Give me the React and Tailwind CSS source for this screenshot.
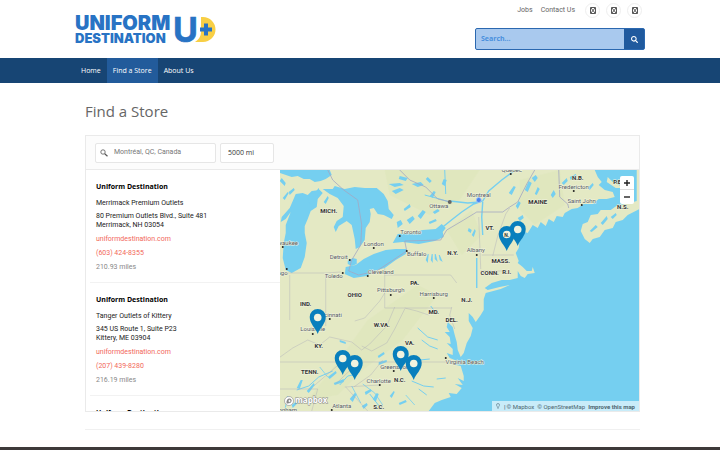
import { FaSearch } from "react-icons/fa";

const stores = [
  {
    id: 1,
    place: "Merrimack Premium Outlets",
    street: "80 Premium Outlets Blvd., Suite 481",
    city: "Merrimack, NH 03054",
    phone: "(603) 424-8355",
    distance: "210.93 miles",
  },
  {
    id: 2,
    place: "Tanger Outlets of Kittery",
    street: "345 US Route 1, Suite P23",
    city: "Kittery, ME 03904",
    phone: "(207) 439-8280",
    distance: "216.19 miles",
  },
  {
    id: 3,
    place: "Tanger Outlets Riverhead",
    street: "200 Tanger Mall Drive",
    city: "Riverhead, NY 11901",
    phone: "(631) 369-2732",
    distance: "317.40 miles",
  },
];

const socials = ["Facebook", "Twitter", "Instagram"];

const pins = [
  [238, 76],
  [227, 81],
  [38, 164],
  [63, 205],
  [75, 210],
  [121, 201],
  [134, 210],
];

const states = [
  ["MICH.", 49, 43],
  ["N.Y.", 173, 85],
  ["PA.", 135, 115],
  ["OHIO", 75, 127],
  ["IND.", 26, 136],
  ["W.VA.", 102, 157],
  ["KY.", 39, 178],
  ["VA.", 130, 175],
  ["TENN.", 30, 204],
  ["N.C.", 120, 212],
  ["S.C.", 99, 239],
  ["MD.", 154, 144],
  ["DEL.", 172, 152],
  ["N.J.", 187, 132],
  ["CONN.", 210, 105],
  ["R.I.", 227, 104],
  ["MASS.", 221, 93],
  ["VT.", 210, 60],
  ["MAINE", 258, 34],
  ["N.B.", 298, 10],
  ["P.E.I.", 340, 14],
  ["N.S.", 343, 39],
];

// name, label x, label y, dot x, dot y
const cities = [
  ["Québec", 232, 2, 231, 4],
  ["Ottawa", 159, 38, 170, 32],
  ["Montreal", 199, 27, 199, 30],
  ["Fredericton", 294, 19, 294, 21],
  ["Saint John", 302, 33, 302, 35],
  ["Toronto", 131, 64, 120, 66],
  ["London", 94, 76, 94, 78],
  ["Detroit", 59, 89, 70, 90],
  ["Toledo", 54, 108, 63, 103],
  ["Cleveland", 101, 104, 88, 106],
  ["Buffalo", 137, 86, 127, 81],
  ["Albany", 196, 82, 197, 85],
  ["Pittsburgh", 111, 122, 111, 125],
  ["Harrisburg", 154, 126, 154, 128],
  ["Milwaukee", 4, 75, 3, 77],
  ["Chicago", -3, 105, 7, 99],
  ["Cincinnati", 49, 147, 50, 149],
  ["Louisville", 33, 161, 33, 164],
  ["Greensboro", 116, 199, 114, 201],
  ["Charlotte", 99, 213, 100, 215],
  ["Virginia Beach", 185, 194, 166, 188],
  ["Atlanta", 62, 238, 52, 240],
  ["Birmingham", 1, 242, -20, 241],
];

const ponds = [
  "M120 6l8 2-2 3-7-2zM132 14l9-2 3 3-6 2zM148 7l4 4-2 2-4-4zM117 52l4-2 2 4-5 4zM127 50l6-4 2 3-5 5zM138 46l5-6 3 2-5 7zM109 14l11-1 4 2-9 2z",
  "M150 26l4-5 2 1-3 6zM162 14l2-5 3 1-2 6zM112 21l8-3 4 2-8 4zM124 39l6-5 1 3-6 4zM149 52l7-3 1 2-7 3zM153 42l5-3 2 2-5 3z",
  "M229 23l5-7 2 1-4 8zM245 20l4-9 3 2-4 9zM255 24l3-7 2 2-3 6zM252 8l4-3 2 3-3 4zM236 36l3-5 2 2-3 6zM238 48l5-3 1 3-4 3zM271 25l3-5 2 4-3 4zM282 13l5-5 1 3-4 4z",
  "M310 61l6-6 2 2-6 5zM321 53l6-7 1 3-5 6zM290 7l6-3 1 2-6 4zM308 18l5-5 1 2-4 5zM331 47l5-4 1 2-4 4zM192 65l3-6 1 2-2 6z",
  "M146 90l2-6 1 0-1 9zM151 90l1-6 1 0 0 9zM155 89l0-5 1 0 2 8zM160 90l-1-5 1 0 3 7zM189 58l3 2-1 3-3-2zM68 91l5-3 4 1 0 5-5 2-4-2z",
  "M2 8l4 5-1 3-5-5zM9 22l5-4 1 2-5 5zM44 32l4-6 1 2-3 6zM28 29l4-7 2 3-4 9zM35 23l4-5 1 3-3 5zM3 28l5-6 1 1-4 7z",
  "M17 218l4-8 2 0-3 9zM27 221l7-8 1 2-6 8zM48 207l8-6 1 2-7 6zM54 213l10-4 0 3-9 3zM70 229l5-6 2 1-4 8zM85 222l6-3 1 2-6 4zM93 229l4-6 2 1-3 8z",
  "M12 235l5-4 1 2-5 5zM98 186l6-4 1 2-6 4zM99 192l8-2 0 2-8 3zM110 226l4-5 1 1-3 6zM119 233l7-3 1 2-7 3zM60 170l6 2 0 2-6-2zM82 236l5-3 1 2-4 4z",
];

function Logo() {
  return (
    <a
      href="#home"
      aria-label="Uniform Destination home"
      className="flex items-center gap-1 font-['Inter',sans-serif] font-black text-[#2873c4]"
    >
      <span className="flex flex-col">
        <span className="text-[20px] leading-[17px]">UNIFORM</span>
        <span className="text-[13px] leading-3">DESTINATION</span>
      </span>
      <svg width="42" height="30" viewBox="0 0 42 30" aria-hidden="true" className="overflow-visible">
        <path d="M25 3h4a12.500 12.500 0 0 1 0 25h-8q6-4 6-10V3z" fill="#f8cf45" />
        <path d="M30 9.500h4v4h4v4h-4v4h-4v-4h-4v-4h4z" fill="#2873c4" />
        <text x="-1" y="28" fontSize="34" fontWeight="700" fill="#2873c4" stroke="#2873c4" strokeWidth=".6">
          U
        </text>
      </svg>
    </a>
  );
}

function TopLinks() {
  return (
    <div className="flex items-center font-['Roboto',sans-serif] text-[7px] text-[#666]">
      <a href="#jobs" className="mr-2">
        Jobs
      </a>
      <a href="#contact" className="mr-2.5">
        Contact Us
      </a>
      <div className="flex gap-1.5">
        {socials.map((name) => (
          <a
            key={name}
            href={"#" + name}
            aria-label={name}
            className="flex size-[15px] items-center justify-center rounded-full border border-[#eee]"
          >
            <svg width="6" height="7" viewBox="0 0 6 7" fill="none" stroke="#444">
              <path d="M.5.5h5v6h-5zM1 1l4 5M5 1L1 6" strokeWidth=".9" />
            </svg>
          </a>
        ))}
      </div>
    </div>
  );
}

function Header() {
  return (
    <header className="mx-auto flex h-[58px] w-full max-w-[570px] items-start justify-between">
      <div className="pt-3.5">
        <Logo />
      </div>
      <div className="flex flex-col items-end gap-2.5 pt-[3px]">
        <div className="pr-[3px]">
          <TopLinks />
        </div>
        <form className="flex h-[22px] w-[170px] rounded-xs border border-[#2b68b0] bg-[#a9c9ee]">
          <input
            type="search"
            aria-label="Search"
            placeholder="Search..."
            className="min-w-0 flex-1 px-[5px] text-[7px] font-bold outline-none placeholder:text-[#4a90dd]"
          />
          <button type="button" aria-label="Submit search" className="flex w-5 items-center justify-center bg-[#205a9e] text-white">
            <FaSearch size={7} />
          </button>
        </form>
      </div>
    </header>
  );
}

function Nav() {
  return (
    <nav className="bg-[#174574]">
      <div className="mx-auto flex h-[25px] w-full max-w-[570px] text-[7px] text-white">
        <a href="#home" className="flex items-center px-1.5 pt-px">
          Home
        </a>
        <a href="#stores" className="flex items-center bg-[#225b9b] px-1.5 pt-px">
          Find a Store
        </a>
        <a href="#about" className="flex items-center px-1.5 pt-px">
          About Us
        </a>
      </div>
    </nav>
  );
}

function StoreItem({ store }) {
  return (
    <li className="ml-1 h-[113px] border-b border-[#f2f2f2] pt-3 pl-1.5 font-['Roboto',sans-serif] text-[7px] leading-[9px] text-[#222]">
      <h2 className="mb-2 font-['Open_Sans',sans-serif] font-bold text-black">Uniform Destination</h2>
      <p className="mb-1">{store.place}</p>
      <p>{store.street}</p>
      <p className="mb-[5px]">{store.city}</p>
      <a href="#site" className="mb-[5px] block text-[#f2685a]">
        uniformdestination.com
      </a>
      <a href="#call" className="mb-[5px] block text-[#f2685a]">
        {store.phone}
      </a>
      <p className="text-[#888]">{store.distance}</p>
    </li>
  );
}

function MapDrawing() {
  return (
    <svg
      viewBox="0 0 360 241"
      preserveAspectRatio="xMidYMid slice"
      className="h-full w-full font-['Roboto',sans-serif]"
      role="img"
      aria-label="Map of stores"
    >
      <path d="M0 0h360v241H0z" fill="#e4e9c4" />
      <g fill="#d9e5b4" opacity=".35">
        <path d="M105 0h95l-20 30-30 15-40-20zM88 150l50-35 20 10-35 45-40 30-25 25-30 5 35-45zM167 60l25-20 10 25-20 20zM240 10l40-10 5 35-30 20-15-15z" />
      </g>
      {/* ocean */}
      <path
        d="M360 241V39l-12 6-5 5-7 2-3 6-8 2-5 7-7 2-3 4-5-4-4-8 2-7 5-2 3-7 7-1 3-4 10 0 7-5 9-1 10-3V0h-42l3 7 4 5-3 3 6 5 8 2 2 5-8 2-8 0-6 5-9 0-6 4-6 1-7 4-2 4-6-1-3 6-5-3-3 7-5-4-3 6-5-3-5 8-3-1-5 8-1 8-3 5 3 8-1 2 5 4 4 4 5 0 1-4 2 6-7 1-3 4-4-2-3-5 0 7-8 2-8 0-10 3-7 5 3 2 12-3 10-2-9 4-15 4-2 6 0 11-3 5-5 7-3-5-4-4 0 8 4 7-2 8-4 7-3 10-3 4-3-7-1-8-2-7-2-8-5-5-1 5 3 5-5 0 5 5 1 7-4-1 6 6 0 6-6-2 3 5 5 2 3 3-6 1 9 2 3 10 0 5-6-3 5 7-8-1 7 4-5 6-8-1 2 4-9 3-7 3-6 8-3 4z"
        fill="#75cff0"
      />
      {/* great lakes */}
      <g fill="#75cff0">
        <path d="M0 0h50l2 5-6 4-5 2-6 1-5-3-6 0-6-3-6 1-12-4z" />
        <path d="M16 24l7-1 5 2 4-4 8-1 3 3-5 6-1 8-6 4-3 8-3 7 0 7 2 10-2 14-4 11-9 5-6-3-3-12 1-15 2-10 0-8 5-13-5 7-5 3 1-5 8-9z" />
        <path d="M43 19l10 0 2-3 10 3 10-2 10 1 12 0 7 6 4 7 1 8 5 6-2 4-8-4-6-1-4-6-4 1 1 5-1 8-4 6-1 12-5 7-4 2-1-10-3-14-5-4-8 5-3 6-2-5 3-6 6-4 1-11-6-8-8-4z" />
        <path d="M66 97l10-2 8-6 10-5 12-4 10-1 11 0-1 5-10 6-11 8-11 3-7 5-13 2-9-4z" />
        <path d="M113 73l5-9 13-1 12-3 13-1 6-5 4 4-3 4 1 5-9 4-16 3-16-2z" />
        {ponds.map((d) => (
          <path key={d} d={d} />
        ))}
        <path d="M328 7l5 5 8 4 7-2-4 4-8 0-9-6z" fill="#e4e9c4" />
      </g>
      {/* rivers */}
      <g fill="none" stroke="#75cff0" strokeWidth="1.400">
        <path d="M163 57l10-8 9-7 12-8 9-3 6-10 13-11 11-8 8-8M203 32l-1 15 1 18M197 118l0-30M170 31l18 2 12-1" />
        <path d="M145 25l15 4 10 3M166 24l-1-24M5 241l3-15M17 220l12-4 10-9 14-6M60 215l8-9 10-2M90 224l11 14M132 211l12 5 10 1M139 219l8 6M157 209l9-1M142 170l8 6 8 3M138 158l10 9 10 3M140 190l10-1M151 136l6 8" strokeWidth="1" />
        <path d="M83 214l12 9 8 12M40 197l8 10M126 225l9 10M72 216l9 17" strokeWidth=".8" />
      </g>
      {/* state lines and borders */}
      <g fill="none" stroke="#a9abb8" strokeWidth=".5">
        <path d="M8 103h38l15-1M46 105v51M10 105v45M105 105h66l6 8M105 118v20h67M105 98v22M0 192h167M0 219h38M115 137l-8 19-17 18-8 6-10-8-22-5-10 8-12-5-15 8-14 10M75 151l10-3 15-17 5-8M125 139l-10 20-8 14-15 8-10-5M62 192l-28 24M65 217l35-2M78 193l-22 21M66 217l22 24M38 219l-6 22M202 85h32M201 101h26M213 86l5-20 8-22 4-6M201 99l-2-52M103 190l-12 15-17 12M125 138l12 3 12 4M172 137l-2 8 5 14" opacity=".8" />
      </g>
      <g fill="none" stroke="#a3a7c2" strokeWidth=".8">
        <path d="M48 0l5 10 11 10 14 10 4 25-1 20-9 15-3 11 10 4 18-4 15-10 15-10-2-10 36-1 6-10 17-10 13-8h26l7-5 8-5 9-18 8-14M120 0l10 10 16 7 12 12 13 3M279 0l1 27 8 7 1 4" />
      </g>
      <g fontSize="6" fill="#555a63" textAnchor="middle" stroke="#f1f3df" strokeWidth="1" paintOrder="stroke">
        {cities.map(([name, x, y]) => (
          <text key={name} x={x} y={y}>
            {name}
          </text>
        ))}
      </g>
      {cities.map(([name, , , x, y]) => (
        <circle key={name} cx={x} cy={y} r="1" fill="#222" />
      ))}
      <circle cx="170" cy="32" r="2" fill="#666" />
      <circle cx="199" cy="30" r="2.500" fill="#4b83ed" stroke="#a9c8fa" strokeWidth=".8" />
      <g fontSize="6" fontWeight="700" fill="#333" textAnchor="middle" stroke="#f1f3df" strokeWidth="1" paintOrder="stroke">
        {states.map(([name, x, y]) => (
          <text key={name} x={x} y={y}>
            {name}
          </text>
        ))}
      </g>
      {pins.map(([x, y]) => (
        <g key={x} transform={`translate(${x} ${y})`}>
          <path d="M0 0C-2-6-8-10-8-17a8 8 0 0 1 16 0C8-10 2-6 0 0z" fill="#087fbd" />
          <circle cy="-16.500" r="3.800" fill="#f1f3df" />
        </g>
      ))}
      <text x="227" y="67" fontSize="5" fontWeight="700" fill="#333" textAnchor="middle">
        N.
      </text>
    </svg>
  );
}

function StoreMap() {
  return (
    <div className="relative min-w-0 flex-1 overflow-hidden">
      <MapDrawing />
      <div className="absolute top-1.5 right-[5px] flex w-3.5 flex-col divide-y divide-[#ddd] rounded-xs bg-white">
        <button type="button" aria-label="Zoom in" className="flex h-3.5 items-center justify-center">
          <svg width="6" height="6" viewBox="0 0 6 6" stroke="#222" strokeWidth="1.400">
            <path d="M3 0v6M0 3h6" />
          </svg>
        </button>
        <button type="button" aria-label="Zoom out" className="flex h-3.5 items-center justify-center">
          <svg width="6" height="6" viewBox="0 0 6 6" stroke="#222" strokeWidth="1.400">
            <path d="M0 3h6" />
          </svg>
        </button>
      </div>
      <div className="absolute bottom-1 left-1 flex items-center gap-px">
        <svg width="10" height="10" viewBox="0 0 10 10">
          <circle cx="5" cy="5" r="4.500" fill="#fff" stroke="#888" strokeWidth=".6" />
          <path d="M2.500 7.500C2 4 4 2 6 2.500 9 3.500 8 8 2.500 7.500z" fill="#888" />
          <path d="M5.500 3.200l.5 1.200 1.200.5-1.200.5-.5 1.200-.5-1.200-1.200-.5 1.200-.5z" fill="#fff" />
        </svg>
        <svg width="36" height="12" viewBox="0 0 36 12" className="font-['Open_Sans',sans-serif]">
          <text x="0" y="8" fontSize="8" fontWeight="700" fill="#fff" stroke="#888" strokeWidth="1" paintOrder="stroke">
            mapbox
          </text>
        </svg>
      </div>
      <div className="absolute right-0 bottom-0 flex h-2.5 items-center bg-white/60 px-1 font-['Roboto',sans-serif] text-[6px] text-[#4d6670]">
        <svg width="4" height="6" viewBox="0 0 4 6" fill="none" stroke="#6c8c9a" strokeWidth=".8" className="mr-1">
          <path d="M2 5.500C2 4 .5 3 .5 2a1.500 1.500 0 0 1 3 0C3.500 3 2 4 2 5.500z" />
        </svg>
        <span className="mr-px font-bold">|</span>
        <a href="#mapbox" className="mr-[3px]">
          © Mapbox
        </a>
        <a href="#osm" className="mr-[3px]">
          © OpenStreetMap
        </a>
        <a href="#improve" className="font-bold">
          Improve this map
        </a>
      </div>
    </div>
  );
}

function Locator() {
  return (
    <section className="border border-[#eaeaea]">
      <div className="flex h-[34px] items-center gap-1 border-b border-[#eaeaea] bg-[#fcfcfc] pl-[9px]">
        <label className="flex h-5 w-[121px] items-center rounded-xs border border-[#e6e6e6] bg-white pl-1">
          <svg width="8" height="8" viewBox="0 0 8 8" fill="none" stroke="#555">
            <circle cx="3" cy="3" r="2.200" strokeWidth=".8" />
            <path d="M4.700 4.700L7.500 7.200" strokeWidth="1.200" />
          </svg>
          <input
            aria-label="Location"
            placeholder="Montréal, QC, Canada"
            className="ml-1.5 min-w-0 flex-1 font-['Roboto',sans-serif] text-[7px] outline-none placeholder:text-[#777]"
          />
        </label>
        <select
          aria-label="Radius"
          className="h-5 w-[54px] appearance-none rounded-xs border border-[#e6e6e6] bg-white pt-px pl-[7px] text-[7px] text-[#333]"
        >
          <option>5000 mi</option>
        </select>
      </div>
      <div className="flex h-[241px]">
        <ul className="w-[35%] overflow-hidden">
          {stores.map((store) => (
            <StoreItem key={store.id} store={store} />
          ))}
        </ul>
        <StoreMap />
      </div>
    </section>
  );
}

export default function App() {
  return (
    <div className="flex h-screen flex-col overflow-hidden bg-white font-['Open_Sans','Noto_Sans',sans-serif]">
      <Header />
      <Nav />
      <main className="mx-auto w-full max-w-[570px] flex-1 pr-[5px] pl-2.5">
        <h1 className="mt-[18px] mb-3.5 text-[15px] leading-5 text-[#666]">Find a Store</h1>
        <Locator />
        <hr className="mt-[17px] border-[#f0f0f0]" />
      </main>
      <footer className="h-[3px] bg-[#3d3a3a]"></footer>
    </div>
  );
}
